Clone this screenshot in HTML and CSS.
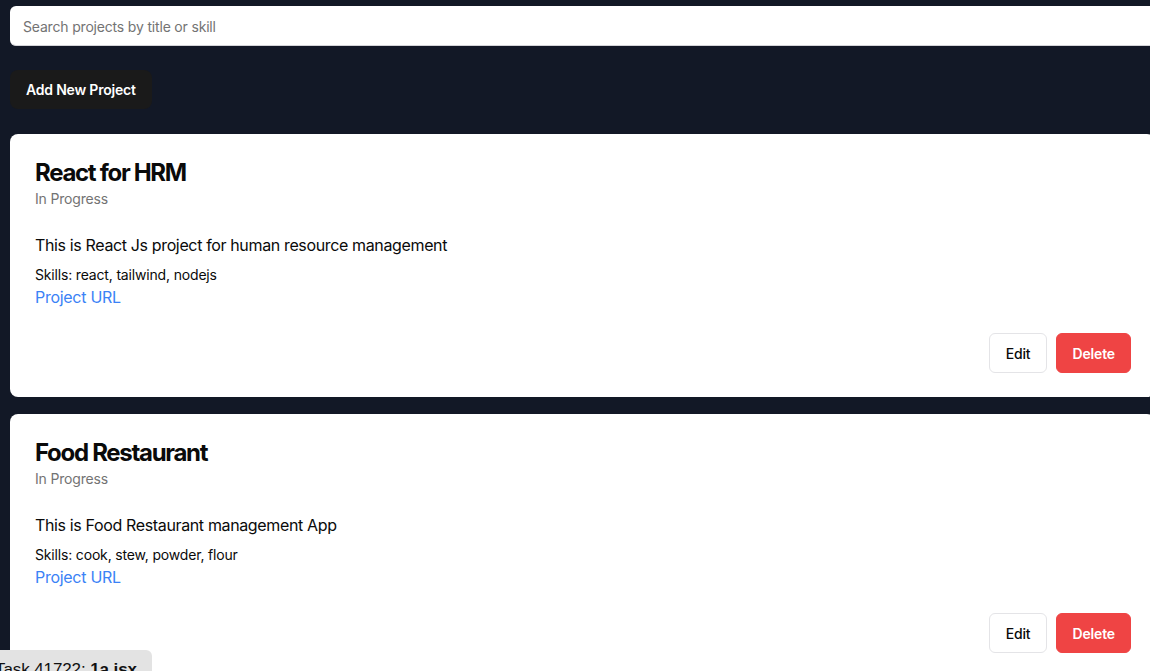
FILE: index.html
```html
<!DOCTYPE html>
<html lang="en">
<head>
<meta charset="utf-8">
<title>Projects</title>
<link rel="stylesheet" href="styles.css">
</head>
<body>
<main class="page">
  <input class="search" type="text" placeholder="Search projects by title or skill">
  <button class="add-btn">Add New Project</button>
  <section class="list">
    <article class="card">
      <h2 class="card-title">React for HRM</h2>
      <p class="card-status">In Progress</p>
      <p class="card-desc">This is React Js project for human resource management</p>
      <p class="card-skills">Skills: react, tailwind, nodejs</p>
      <a class="card-link" href="#">Project URL</a>
      <div class="card-actions">
        <button class="btn btn-edit">Edit</button>
        <button class="btn btn-delete">Delete</button>
      </div>
    </article>
    <article class="card">
      <h2 class="card-title">Food Restaurant</h2>
      <p class="card-status">In Progress</p>
      <p class="card-desc">This is Food Restaurant management App</p>
      <p class="card-skills">Skills: cook, stew, powder, flour</p>
      <a class="card-link" href="#">Project URL</a>
      <div class="card-actions">
        <button class="btn btn-edit">Edit</button>
        <button class="btn btn-delete">Delete</button>
      </div>
    </article>
  </section>
</main>
<div class="task-tag">Task 41722: <b>1a.jsx</b></div>
</body>
</html>
```

FILE: styles.css
```css
html, body {
  margin: 0;
  padding: 0;
  overflow: hidden;
  height: 100%;
}
body {
  background: #121826;
  font-family: Inter, "Noto Sans", "Liberation Sans", sans-serif;
  color: #111;
}
.page {
  display: flex;
  flex-direction: column;
  align-items: flex-start;
  padding: 6px 0 0 10px;
  width: 1146px;
}
.search {
  box-sizing: border-box;
  width: 1146px;
  height: 40px;
  border: none;
  border-bottom: 1px solid #d4d4d8;
  border-radius: 6px;
  background: #fff;
  padding: 2px 13px 0;
  font-family: inherit;
  font-size: 14px;
  letter-spacing: -0.18px;
  color: #111;
  outline: none;
}
.search::placeholder {
  color: #737373;
}
.add-btn {
  margin-top: 24px;
  height: 39px;
  padding: 0 16px;
  border: none;
  border-radius: 8px;
  background: #1a1a1a;
  color: #fff;
  font-family: inherit;
  font-size: 14px;
  font-weight: 600;
  letter-spacing: -0.2px;
}
.list {
  margin-top: 25px;
  display: flex;
  flex-direction: column;
  gap: 17px;
  width: 100%;
}
.card {
  box-sizing: border-box;
  width: 1145px;
  background: #fff;
  border-radius: 8px;
  padding: 24px 24px 24px 25px;
  display: flex;
  flex-direction: column;
}
.card-title {
  margin: 0;
  font-size: 24px;
  line-height: 28px;
  font-weight: 650;
  letter-spacing: -1.3px;
  color: #0a0a0a;
  padding-top: 1px;
}
.card-status {
  margin: 2px 0 0;
  font-size: 14px;
  line-height: 20px;
  letter-spacing: -0.18px;
  color: #737373;
}
.card-desc {
  margin: 24px 0 0;
  font-size: 16px;
  line-height: 24px;
  letter-spacing: -0.36px;
  color: #0a0a0a;
}
.card-skills {
  margin: 8px 0 0;
  font-size: 14px;
  line-height: 20px;
  letter-spacing: -0.17px;
  color: #0a0a0a;
}
.card-link {
  margin-top: 0;
  font-size: 16px;
  line-height: 24px;
  letter-spacing: -0.28px;
  color: #3b82f6;
  text-decoration: none;
  align-self: flex-start;
}
.card-actions {
  margin-top: 24px;
  display: flex;
  justify-content: flex-end;
  gap: 9px;
}
.btn {
  height: 40px;
  padding: 0 15px;
  border-radius: 6px;
  font-family: inherit;
  font-size: 14px;
  font-weight: 500;
  letter-spacing: -0.15px;
}
.btn-edit {
  padding: 0 16px;
  background: #fff;
  border: 1px solid #e4e4e7;
  color: #0a0a0a;
}
.btn-delete {
  background: #ef4444;
  border: 1px solid #ef4444;
  color: #fff;
  font-weight: 600;
}
.task-tag {
  position: fixed;
  left: 0;
  top: 650px;
  width: 152px;
  height: 40px;
  box-sizing: border-box;
  background: #e3e3e3;
  border-top-right-radius: 6px;
  padding: 10px 0 0 0;
  text-indent: -5px;
  font-family: "Liberation Sans", Arial, sans-serif;
  font-size: 17px;
  letter-spacing: -0.1px;
  color: #111;
  white-space: nowrap;
  overflow: hidden;
}
```
